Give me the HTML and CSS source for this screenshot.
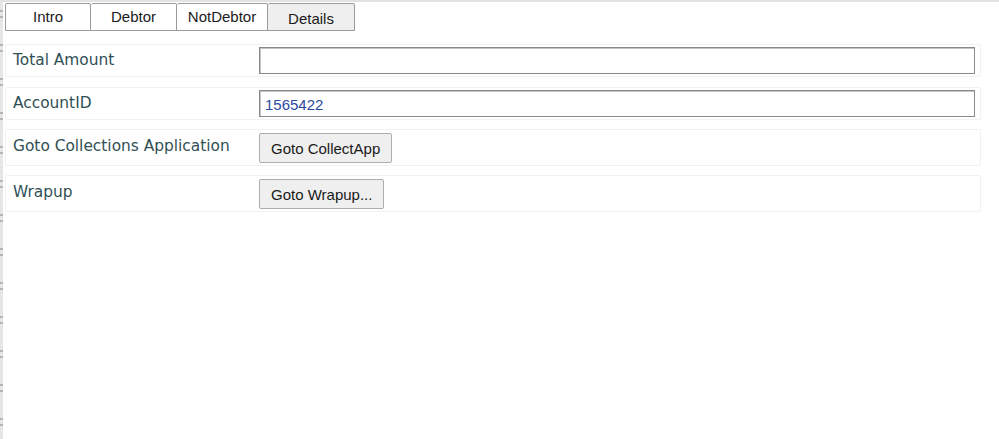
FILE: index.html
```html
<!DOCTYPE html>
<html>
<head>
<meta charset="utf-8">
<link rel="stylesheet" href="styles.css">
</head>
<body>
<div class="page">
  <div class="rail"></div>
  <div class="main">
    <div class="tabs">
      <div class="tab">Intro</div>
      <div class="tab">Debtor</div>
      <div class="tab tab-nd">NotDebtor</div>
      <div class="tab tab-active">Details</div>
    </div>
    <div class="rows">
      <div class="row">
        <div class="label">Total Amount</div>
        <div class="field"><input class="input" type="text" value=""></div>
      </div>
      <div class="row">
        <div class="label">AccountID</div>
        <div class="field"><input class="input" type="text" value="1565422"></div>
      </div>
      <div class="row row-btn">
        <div class="label">Goto Collections Application</div>
        <div class="field"><button class="btn">Goto CollectApp</button></div>
      </div>
      <div class="row row-btn">
        <div class="label">Wrapup</div>
        <div class="field"><button class="btn">Goto Wrapup...</button></div>
      </div>
    </div>
  </div>
</div>
</body>
</html>
```
FILE: styles.css
```css
html, body {
  margin: 0;
  padding: 0;
  background: #ffffff;
}
.page {
  display: flex;
  height: 439px;
  border-top: 2px solid #e2e2e2;
  box-sizing: border-box;
}
.rail {
  width: 3px;
  flex: 0 0 3px;
  background:
    repeating-linear-gradient(to bottom,
      transparent 0, transparent 8px,
      #b4b4b4 8px, #b4b4b4 10px,
      transparent 10px, transparent 14px,
      #b4b4b4 14px, #b4b4b4 16px,
      transparent 16px, transparent 34px),
    #e6e6e6;
}
.main {
  flex: 1;
  padding: 1px 0 0 2px;
}
.tabs {
  display: flex;
  height: 28px;
  align-items: flex-start;
}
.tab {
  box-sizing: border-box;
  width: 86px;
  height: 28px;
  border: 1px solid #9b9b9b;
  border-left-width: 0;
  border-bottom-width: 1px;
  border-radius: 2px 2px 0 0;
  font: 15px "Liberation Sans", Arial, sans-serif;
  color: #1a1a1a;
  display: flex;
  justify-content: center;
  align-items: center;
  padding-bottom: 2px;
  background: #fff;
}
.tab:first-child {
  border-left-width: 1px;
}
.tab-nd {
  width: 91px;
}
.tab-active {
  width: 87px;
  background: #efefef;
  padding-bottom: 0;
  padding-top: 2px;
}
.rows {
  margin-top: 13px;
  width: 976px;
  display: flex;
  flex-direction: column;
  gap: 9px;
}
.row {
  display: grid;
  grid-template-columns: 253px 1fr;
  border: 1px solid #f1f1f1;
  border-radius: 2px;
  padding: 2px 5px 2px 0;
}
.row:first-child + .row {
  margin-top: 1px;
}
.row-btn {
  padding: 3px 5px 2px 0;
}
.label {
  font: 15.4px "DejaVu Sans", Verdana, sans-serif;
  color: #2f4f55;
  padding: 4px 0 0 7px;
  line-height: 18px;
}
.field {
  display: flex;
  align-items: center;
}
.input {
  box-sizing: border-box;
  width: 100%;
  height: 27px;
  margin: 0;
  border: 1px solid #8a8a8a;
  box-shadow: inset 1px 1px 0 #c4c4c4;
  padding: 1px 5px 0;
  font: 15px "Liberation Sans", Arial, sans-serif;
  color: #2a4aa0;
  background: #fff;
  outline: none;
}
.btn {
  box-sizing: border-box;
  height: 30px;
  margin: 0;
  padding: 0 11px;
  border: 1px solid #adadad;
  border-radius: 2px;
  background: #efefef;
  font: 15px "Liberation Sans", Arial, sans-serif;
  color: #1a1a1a;
}
```
